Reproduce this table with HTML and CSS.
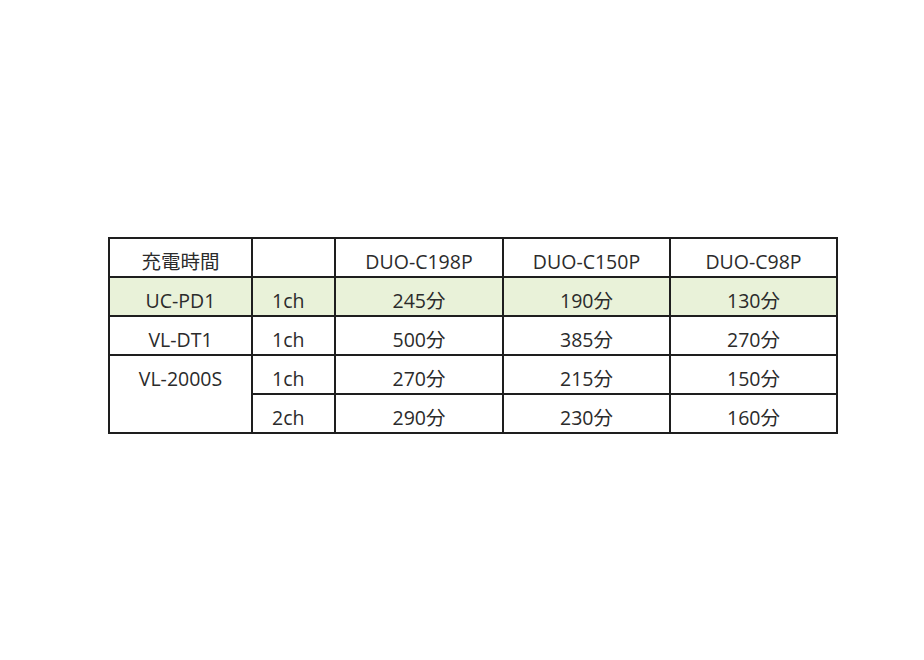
FILE: index.html
```html
<!DOCTYPE html>
<html lang="ja">
<head>
<meta charset="utf-8">
<link rel="stylesheet" href="styles.css">
</head>
<body>
<table class="chart">
  <colgroup>
    <col class="c1"><col class="c2"><col class="c3"><col class="c4"><col class="c5">
  </colgroup>
  <tr>
    <td class="center">充電時間</td>
    <td></td>
    <td class="center">DUO-C198P</td>
    <td class="center">DUO-C150P</td>
    <td class="center">DUO-C98P</td>
  </tr>
  <tr class="hl">
    <td class="center">UC-PD1</td>
    <td class="ch">1ch</td>
    <td class="center">245分</td>
    <td class="center">190分</td>
    <td class="center">130分</td>
  </tr>
  <tr>
    <td class="center">VL-DT1</td>
    <td class="ch">1ch</td>
    <td class="center">500分</td>
    <td class="center">385分</td>
    <td class="center">270分</td>
  </tr>
  <tr>
    <td class="center top" rowspan="2">VL-2000S</td>
    <td class="ch">1ch</td>
    <td class="center">270分</td>
    <td class="center">215分</td>
    <td class="center">150分</td>
  </tr>
  <tr>
    <td class="ch">2ch</td>
    <td class="center">290分</td>
    <td class="center">230分</td>
    <td class="center">160分</td>
  </tr>
</table>
</body>
</html>
```
FILE: styles.css
```css
html, body {
  margin: 0;
  padding: 0;
  background: #ffffff;
}
body {
  padding: 237px 0 0 108px;
  font-family: "Open Sans", "Noto Sans CJK JP", sans-serif;
  color: #2b2b2b;
}
.chart {
  border-collapse: collapse;
  table-layout: fixed;
  width: 730px;
}
.c1 { width: 143px; }
.c2 { width: 83px; }
.c3 { width: 168px; }
.c4 { width: 167px; }
.c5 { width: 167px; }
.chart td {
  border: 2px solid #1e1e1e;
  height: 37px;
  padding: 9px 0 0 0;
  box-sizing: border-box;
  font-size: 19.5px;
  line-height: 28px;
  vertical-align: top;
  white-space: nowrap;
  overflow: hidden;
}
.chart .center { text-align: center; }
.chart .ch { padding-left: 19px; }
.hl td { background: #e9f2d9; }
```
